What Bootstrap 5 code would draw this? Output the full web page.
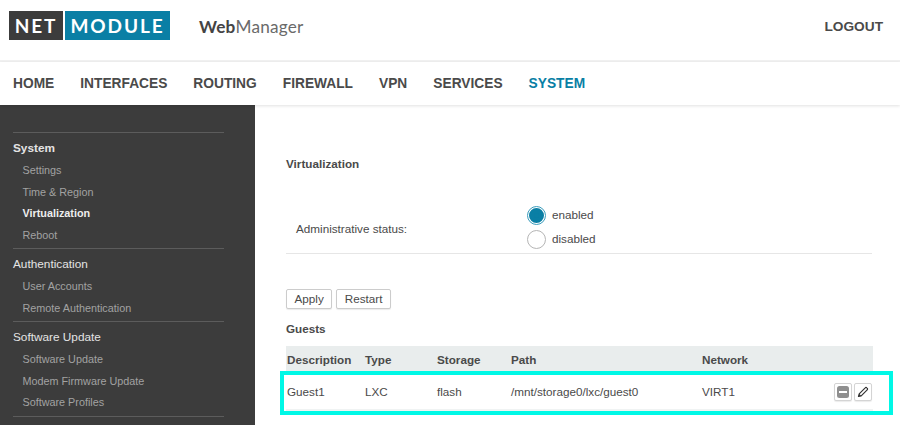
<!DOCTYPE html>
<html lang="en"><head><meta charset="utf-8"><title>WebManager</title>
<link href="https://cdn.jsdelivr.net/npm/bootstrap@5.3.0/dist/css/bootstrap.min.css" rel="stylesheet">
<style>
html,body{height:425px;overflow:hidden}
body{font-family:"Liberation Sans",Arial,sans-serif;color:#4a4a4a;font-size:11.7px;background:#fff}
.top-bar{height:62px;padding:11px 17px 0 9px;border-bottom:2px solid #f1f1f1}
.logo-box{height:29px;display:flex;align-items:center;justify-content:center;color:#fff;font-family:"Lato",sans-serif;font-weight:700;font-size:19px;letter-spacing:1.9px;line-height:1}
.logo-net{width:54px;background:#3c3c3c}
.logo-mod{width:105px;background:#0a7fa5;margin-left:2px}
.wm{font-family:"Lato",sans-serif;font-size:17.2px;color:#6a6a6a;margin-left:29px;letter-spacing:.2px;margin-top:3px}
.wm b{color:#444;font-weight:700}
.logout{font-size:13.7px;font-weight:700;color:#4a4a4a;margin-top:2px}
.main-nav{height:43px;padding:2px 0 0 13px;gap:26px;box-shadow:0 1px 3px rgba(0,0,0,.12);position:relative}
.main-nav a{font-size:13.75px;font-weight:700;color:#4a4a4a;text-decoration:none}
.main-nav a.on{color:#0a7fa5}
.side{width:255px;flex:none;background:#3c3c3c;height:320px;padding:27px 31px 0 13px;overflow:hidden}
.side-sec{border-top:1px solid #5c5c5c;padding:5px 0 2px}
.side-h{color:#e4e4e4;font-size:11.8px;line-height:21px;height:22px}
.side-h.sel{font-weight:700}
.side a{display:block;color:#a2a2a2;font-size:10.8px;line-height:21.5px;padding-left:9.5px;text-decoration:none}
.side a.on{color:#eee;font-weight:700}
.cnt{position:relative;flex:1;padding:52px 28px 0 31px;min-width:0}
.ttl{font-weight:700;font-size:11.7px;line-height:14px;color:#4a4a4a}
.st-row{margin-top:36px;height:47px;border-bottom:1px solid #e6e6e6;padding-left:10px}
.st-lab{width:231px;margin-top:-3px}
.st-opts{padding-bottom:6px}
.rad{line-height:24px;height:24px;gap:6px}
.rdot{width:19px;height:19px;border-radius:50%;border:1px solid #b5b5b5;background:#fff;flex:none}
.rdot.act{border:5px solid #0a7fa5;background:#0a7fa5;outline:1px solid #3a9cbc;outline-offset:1px;width:15px;height:15px;margin:2px}
.btn-gy{font-size:11.7px;line-height:14px;padding:2px 7.5px;border:1px solid #ccc;border-radius:2px;background:#fff;color:#4a4a4a;box-shadow:0 1px 1px rgba(0,0,0,.08)}
.btn-row{margin-top:35px;gap:4px}
.gst{margin-top:13px;margin-bottom:10px}
.gtab{width:587px;table-layout:fixed;margin:0;border-collapse:collapse}
.gtab th{background:#e9eded;height:26px;padding:1px 0 0 1px;font-size:11.7px;font-weight:700;color:#4a4a4a;border:0;vertical-align:middle}
.gtab td{height:38px;padding:3px 0 0 1px;font-size:11.7px;color:#4a4a4a;border:0;border-bottom:3px solid #f0f3f3;background:#fff;box-shadow:none;vertical-align:middle}
.ic-row{gap:2px;padding-right:1px}
.ic-btn{width:18px;height:18px;padding:0;border:1px solid #d4d4d4;border-radius:2px;background:#fff;display:inline-flex;align-items:center;justify-content:center;box-shadow:0 1px 1px rgba(0,0,0,.08)}
.hl{position:absolute;left:25px;top:266px;width:613px;height:44px;border:4px solid #00f8e6;pointer-events:none}
</style></head>
<body>
<header class="top-bar d-flex align-items-start">
  <div class="logo-box logo-net">NET</div>
  <div class="logo-box logo-mod">MODULE</div>
  <div class="wm"><b>Web</b>Manager</div>
  <div class="logout ms-auto pt-1">LOGOUT</div>
</header>
<nav class="main-nav d-flex align-items-center">
  <a href="#">HOME</a><a href="#">INTERFACES</a><a href="#">ROUTING</a><a href="#">FIREWALL</a><a href="#">VPN</a><a href="#">SERVICES</a><a href="#" class="on">SYSTEM</a>
</nav>
<div class="d-flex">
  <aside class="side">
    <div class="side-sec"><div class="side-h sel">System</div><a href="#">Settings</a><a href="#">Time &amp; Region</a><a href="#" class="on">Virtualization</a><a href="#">Reboot</a></div>
    <div class="side-sec"><div class="side-h">Authentication</div><a href="#">User Accounts</a><a href="#">Remote Authentication</a></div>
    <div class="side-sec"><div class="side-h">Software Update</div><a href="#">Software Update</a><a href="#">Modem Firmware Update</a><a href="#">Software Profiles</a></div>
    <div class="side-sec"></div>
  </aside>
  <main class="cnt">
    <div class="ttl">Virtualization</div>
    <div class="st-row d-flex align-items-center">
      <div class="st-lab">Administrative status:</div>
      <div class="st-opts">
        <div class="rad d-flex align-items-center"><span class="rdot act"></span><span>enabled</span></div>
        <div class="rad d-flex align-items-center"><span class="rdot"></span><span>disabled</span></div>
      </div>
    </div>
    <div class="btn-row d-flex"><button class="btn-gy" type="button">Apply</button><button class="btn-gy" type="button">Restart</button></div>
    <div class="ttl gst">Guests</div>
    <table class="table gtab">
      <colgroup><col style="width:78px"><col style="width:72px"><col style="width:74px"><col style="width:191px"><col style="width:110px"><col></colgroup>
      <thead><tr><th>Description</th><th>Type</th><th>Storage</th><th>Path</th><th>Network</th><th></th></tr></thead>
      <tbody><tr><td>Guest1</td><td>LXC</td><td>flash</td><td>/mnt/storage0/lxc/guest0</td><td>VIRT1</td>
      <td><div class="d-flex justify-content-end ic-row">
        <button class="ic-btn" type="button" aria-label="Remove"><svg width="14" height="14" viewBox="0 0 14 14"><rect x="1" y="1" width="12" height="12" rx="2.5" fill="#8f8f8f"/><rect x="3" y="6" width="8" height="2" fill="#fff"/></svg></button>
        <button class="ic-btn" type="button" aria-label="Edit"><svg width="14" height="14" viewBox="0 0 14 14"><path d="M2.5 11.5l.7-2.7 6-6a1.1 1.1 0 0 1 1.6 0l.4.4a1.1 1.1 0 0 1 0 1.6l-6 6z" fill="#fff" stroke="#333" stroke-width="1.2" stroke-linejoin="round"/><path d="M2.5 11.5l.7-2.7 2 2z" fill="#333"/></svg></button>
      </div></td></tr></tbody>
    </table>
    <div class="hl"></div>
  </main>
</div>
<script src="https://cdn.jsdelivr.net/npm/bootstrap@5.3.0/dist/js/bootstrap.bundle.min.js"></script>
</body></html>
